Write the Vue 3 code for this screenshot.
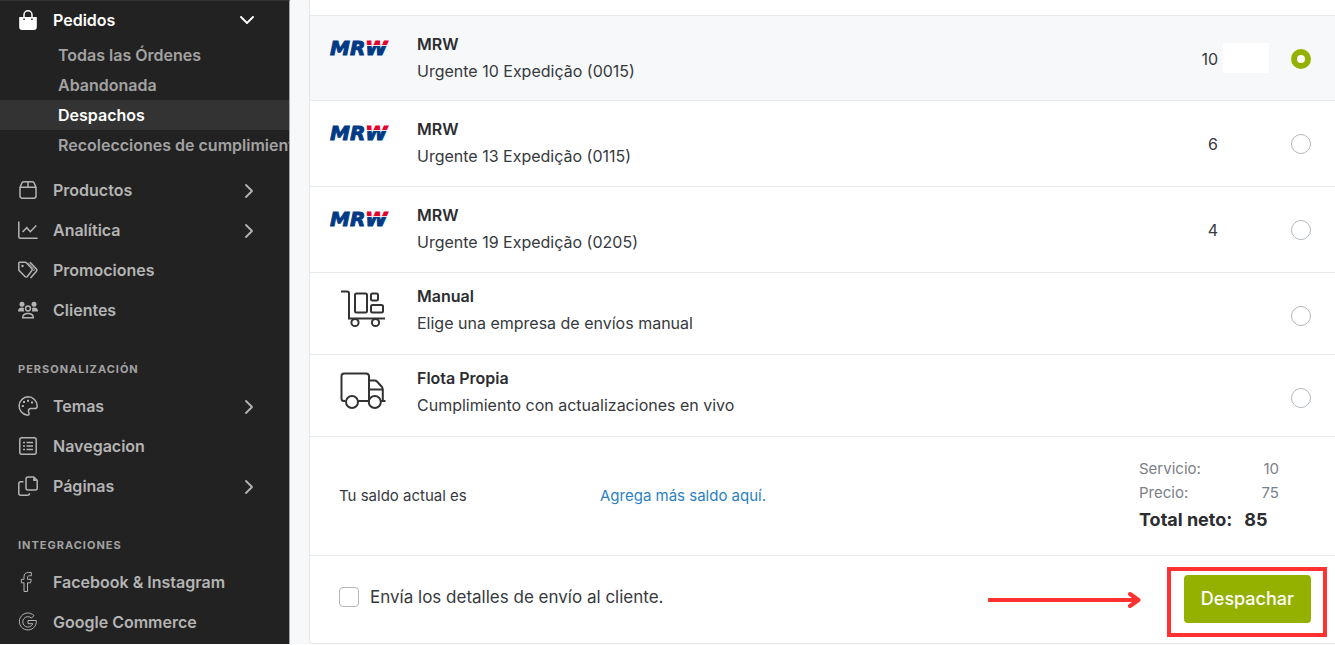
<script setup>
import { ref } from 'vue'

const orders = [
  { label: 'Todas las Órdenes' },
  { label: 'Abandonada' },
  { label: 'Despachos', active: true },
  { label: 'Recolecciones de cumplimiento' },
]

const groups = [
  {
    items: [
      { label: 'Productos', icon: 'box', more: true },
      { label: 'Analítica', icon: 'chart', more: true },
      { label: 'Promociones', icon: 'tags' },
      { label: 'Clientes', icon: 'people' },
    ],
  },
  {
    title: 'Personalización',
    items: [
      { label: 'Temas', icon: 'palette', more: true },
      { label: 'Navegacion', icon: 'list' },
      { label: 'Páginas', icon: 'pages', more: true },
    ],
  },
  {
    title: 'Integraciones',
    items: [
      { label: 'Facebook & Instagram', icon: 'facebook' },
      { label: 'Google Commerce', icon: 'google' },
    ],
  },
]

const services = [
  { id: 'u10', name: 'MRW', detail: 'Urgente 10 Expedição (0015)', price: '10', logo: 'mrw' },
  { id: 'u13', name: 'MRW', detail: 'Urgente 13 Expedição (0115)', price: '6', logo: 'mrw' },
  { id: 'u19', name: 'MRW', detail: 'Urgente 19 Expedição (0205)', price: '4', logo: 'mrw' },
  { id: 'manual', name: 'Manual', detail: 'Elige una empresa de envíos manual', logo: 'cart' },
  { id: 'fleet', name: 'Flota Propia', detail: 'Cumplimiento con actualizaciones en vivo', logo: 'truck' },
]

const selected = ref('u10')
const notify = ref(false)
</script>

<template>
  <div class="layout">
    <nav class="sidebar" aria-label="Menú">
      <a class="item open" href="#">
        <svg class="icon" viewBox="0 0 20 20">
          <path class="solid" d="M1.200 7h17.600v10a3 3 0 0 1-3 3H4.200a3 3 0 0 1-3-3z" />
          <path d="M6 9V4.800a4 4 0 0 1 8 0V9" />
          <path class="hole" d="M5.300 8.500h1.500v1.500H5.300zM13.200 8.500h1.500v1.500h-1.500z" />
        </svg>
        <span class="label">Pedidos</span>
        <svg class="chevron" viewBox="0 0 16 16"><path d="M1 5l6 6 6-6" /></svg>
      </a>
      <a v-for="o in orders" :key="o.label" class="sub" :class="{ active: o.active }" href="#">{{ o.label }}</a>

      <section v-for="(g, i) in groups" :key="i" class="group" :class="{ first: !g.title }">
        <h2 v-if="g.title">{{ g.title }}</h2>
        <a v-for="it in g.items" :key="it.label" class="item" href="#">
          <svg v-if="it.icon === 'box'" class="icon" viewBox="0 0 20 20">
            <path d="M2 7.200L4.200 2.500Q4.700 1.800 5.500 1.800h9q.8 0 1.300.7L18 7.200V16a2.200 2.200 0 0 1-2.200 2.200H4.200A2.200 2.200 0 0 1 2 16zM2 7.200h16M10 1.800v5.400" />
          </svg>
          <svg v-else-if="it.icon === 'chart'" class="icon" viewBox="0 0 20 20">
            <path d="M.8 1.500v15.300q0 1.500 1.500 1.500h17.200M4.500 12l4.300-4.300 3.500 4 6-6.200" />
          </svg>
          <svg v-else-if="it.icon === 'tags'" class="icon" viewBox="0 0 20 20">
            <path d="M.8 3q0-.8.800-.8h5.500q.7 0 1.200.5l5.400 5.700q1.200 1.200 0 2.400L9.400 16.500q-1.200 1.200-2.400 0L1.300 10.700Q.8 10.200.8 9.500zM12 2.200l6 6.200q1.700 1.700 0 3.400L12.500 18" />
            <path class="fine" d="M10 2.600l5.600 5.700q1.300 1.500 0 2.700" />
            <circle class="solid" cx="4.500" cy="6" r="1.200" />
          </svg>
          <svg v-else-if="it.icon === 'people'" class="icon" viewBox="0 0 20 20">
            <circle class="solid" cx="4" cy="4.300" r="2.500" />
            <circle class="solid" cx="16" cy="4.300" r="2.500" />
            <path class="solid" d="M0 11.500q0-4 4-4 1.500 0 2 .7-.6 1.500.2 3.300zM20 11.500q0-4-4-4-1.500 0-2 .7.600 1.500-.2 3.300z" />
            <circle cx="10" cy="8.500" r="2.400" />
            <path d="M4.700 17.800q0-4.300 5.300-4.300t5.300 4.300z" />
          </svg>
          <svg v-else-if="it.icon === 'palette'" class="icon" viewBox="0 0 20 20">
            <path d="M10 .8a9.200 9.200 0 0 0-1 18.300c1.600.2 2.300-.8 2-2l-.5-1.600c-.4-1.500.6-3 2.200-3h4c1.600 0 2.500-1 2.500-2.600C19 4.800 15 .8 10 .8z" />
            <path class="solid" d="M3.800 9h2v2h-2zM5 5h2v2H5zM9 3.800h2v2H9zM13 5.500h2v2h-2z" />
          </svg>
          <svg v-else-if="it.icon === 'list'" class="icon" viewBox="0 0 20 20">
            <rect x="1.800" y="1.800" width="16.400" height="16.400" rx="2" />
            <path d="M5 6.500h2M5 10h2M5 13.500h2M8.500 6.500h6.500M8.500 10h6.500M8.500 13.500h6.500" />
          </svg>
          <svg v-else-if="it.icon === 'pages'" class="icon" viewBox="0 0 20 20">
            <path d="M10 .9h5.800l3.400 3.400V12a2 2 0 0 1-2 2H10a2 2 0 0 1-2-2V2.900a2 2 0 0 1 2-2zM5.500 5.700H2.800a2 2 0 0 0-2 2v9.500a2 2 0 0 0 2 2h6.700a2 2 0 0 0 2-2" />
            <path class="solid" d="M15.200 1l4 4h-4z" />
          </svg>
          <svg v-else-if="it.icon === 'facebook'" class="icon thin" viewBox="0 0 20 20">
            <path d="M6 19.500v-8.700H3.300V7.300H6V4.800C6 1.900 7.600.5 10.500.5h2.800v3.300h-2c-1.200 0-1.800.5-1.800 1.700v1.800h3.700l-.6 3.500H9.500v8.700z" />
          </svg>
          <svg v-else class="icon thin" viewBox="0 0 20 20">
            <path d="M16 3.600A8.500 8.500 0 1 0 18.300 8.500H10v3.200h4.800A5.200 5.200 0 1 1 13.500 6.100z" />
          </svg>
          <span class="label">{{ it.label }}</span>
          <svg v-if="it.more" class="chevron" viewBox="0 0 16 16"><path d="M6 3l6 6-6 6" /></svg>
        </a>
      </section>
    </nav>

    <main class="content">
      <form class="card" @submit.prevent>
        <label v-for="s in services" :key="s.id" class="row" :class="{ chosen: selected === s.id, compact: !s.price }">
          <span class="logo">
            <svg v-if="s.logo === 'mrw'" class="mrw" viewBox="0 0 72 26" role="img" aria-label="MRW">
              <defs>
                <linearGradient :id="'w-' + s.id" gradientUnits="userSpaceOnUse" x1="0" y1="0" x2="0" y2="26">
                  <stop offset="0.370" stop-color="#e4002b" />
                  <stop offset="0.370" stop-color="#f7dfe5" />
                  <stop offset="0.410" stop-color="#f7dfe5" />
                  <stop offset="0.410" stop-color="#003a85" />
                </linearGradient>
              </defs>
              <text x="2" y="20">MR<tspan :fill="`url(#w-${s.id})`" :stroke="`url(#w-${s.id})`">W</tspan></text>
            </svg>
            <svg v-else-if="s.logo === 'cart'" class="pic" viewBox="0 0 46 40">
              <path d="M1 2.500h6q2 0 2 2V29.500H45" />
              <rect x="15" y="4.500" width="12" height="19" rx="1.500" />
              <rect x="31" y="4.500" width="7" height="7" rx="1.500" />
              <rect x="31" y="16" width="12" height="7.500" rx="1.500" />
              <circle cx="15" cy="33.500" r="3.600" />
              <circle cx="35.500" cy="33.500" r="3.600" />
            </svg>
            <svg v-else class="pic" viewBox="0 0 46 40">
              <path d="M5.500 30H4q-2.500 0-2.500-2.500V5q0-2.500 2.500-2.500H26q3 0 3 3V30H17.500M29 9.500h5.500Q36 9.500 37 10.500l5 5.500q.8 1 .8 2.500V30M29 18.500h13.500M41 30h4.500" />
              <circle cx="12" cy="31" r="6" />
              <circle cx="34.800" cy="31" r="6" />
            </svg>
          </span>
          <span class="text">
            <strong>{{ s.name }}</strong>
            <span>{{ s.detail }}</span>
          </span>
          <span class="price">{{ s.price }}</span>
          <span class="currency"></span>
          <input v-model="selected" type="radio" name="service" :value="s.id" />
        </label>

        <section class="balance">
          <span class="saldo">Tu saldo actual es</span>
          <a href="#">Agrega más saldo aquí.</a>
          <dl>
            <div><dt>Servicio:</dt><dd>10</dd></div>
            <div><dt>Precio:</dt><dd>75</dd></div>
            <div class="total"><dt>Total neto:</dt><dd>85</dd></div>
          </dl>
        </section>

        <footer class="actions">
          <label class="notify">
            <input v-model="notify" type="checkbox" />
            Envía los detalles de envío al cliente.
          </label>
          <svg class="arrow" viewBox="0 0 154 18" aria-hidden="true">
            <path d="M0 10H150" />
            <path d="M142 4l8.500 6-8.500 6" stroke-linecap="round" stroke-linejoin="round" />
          </svg>
          <span class="callout"><button type="submit">Despachar</button></span>
        </footer>
      </form>
    </main>
  </div>
</template>

<style>
body { background: #fff; }
</style>

<style scoped>
* { box-sizing: border-box; }
.layout {
  display: flex;
  overflow: hidden;
  font-family: Inter, "Noto Sans", sans-serif;
  font-size: 16px;
  color: #36393d;
}
a { text-decoration: none; }
.sidebar {
  flex: 0 0 290px;
  overflow: hidden;
  padding-bottom: 2px;
  background: #222;
  border-top: 1px solid #333;
  border-right: 1px solid #a5a6a8;
  color: #b4b4b4;
  font-weight: 600;
}
.item {
  display: flex;
  align-items: center;
  height: 40px;
  padding: 0 33px 0 18px;
  color: inherit;
}
.item.open { height: 37px; margin-bottom: 2px; color: #fff; }
.icon { flex: none; width: 20px; height: 20px; margin-right: 15px; }
.label { flex: 1; }
.chevron { width: 16px; height: 16px; }
.icon, .chevron, .pic { fill: none; stroke: currentColor; stroke-width: 1.5; }
.chevron { stroke-width: 1.8; stroke-linecap: round; stroke-linejoin: round; }
.icon.thin { stroke-width: 1; }
.icon .fine { stroke-width: 1; }
.icon .solid { fill: currentColor; stroke: none; }
.icon .hole { fill: #222; stroke: none; }
.sub {
  display: block;
  height: 30px;
  padding-left: 58px;
  line-height: 30px;
  white-space: nowrap;
  color: #a2a2a2;
}
.sub.active { background: #333; color: #fff; }
.group.first { padding-top: 10px; }
.group h2 {
  margin: 0;
  padding: 31px 18px 8px;
  font-size: 11px;
  line-height: 17px;
  letter-spacing: 1px;
  text-transform: uppercase;
  color: #a2a2a2;
}
.content { flex: 1; min-width: 0; padding-left: 19px; background: #f7f8fa; }
.card {
  padding-top: 15px;
  background: #fff;
  border: 1px solid #e3e5e8;
  border-width: 0 0 1px 1px;
  border-bottom-left-radius: 4px;
}
.row {
  display: flex;
  align-items: center;
  padding: 15px 24px 16px 18px;
  border-top: 1px solid #e9ebee;
}
.row.chosen { padding-bottom: 15px; background: #f7f8fa; }
.row.compact { padding-top: 10px; padding-bottom: 17px; }
.logo { align-self: flex-start; flex: none; display: flex; width: 89px; }
.mrw { width: 72px; height: 26px; margin-top: 4px; }
.mrw text {
  font: italic bold 20px "DejaVu Sans", sans-serif;
  fill: #003a85;
  stroke: #003a85;
  stroke-width: 1;
}
.pic { width: 46px; height: 40px; margin: 6px 0 0 12px; stroke-width: 2; color: #333; }
.text { flex: 1; display: flex; flex-direction: column; line-height: 27px; }
.text strong { font-weight: 600; color: #2b2d30; }
.price { width: 40px; padding-top: 2px; text-align: right; }
.currency { width: 46px; height: 30px; margin: 0 22px 0 5px; background: #fff; }
input { appearance: none; flex: none; width: 20px; height: 20px; margin: 0; background: #fff; border: 1px solid #b3b8be; }
input[type="radio"] { margin-top: 2px; border-radius: 50%; }
input[type="radio"]:checked { border: 6px solid #95b100; }
.compact input[type="radio"] { margin-top: 12px; }
.balance {
  display: flex;
  align-items: center;
  padding: 20px 56px 21px 29px;
  border-top: 1px solid #e9ebee;
  font-size: 15px;
}
.saldo { width: 261px; }
.balance a { color: #2b7fbf; }
dl { width: 140px; margin: 0 0 0 auto; line-height: 24px; color: #7b8087; }
dl div { display: flex; justify-content: space-between; }
dd { margin: 0; }
dl .total {
  justify-content: flex-start;
  gap: 12px;
  font-size: 18px;
  line-height: 29px;
  font-weight: 700;
  white-space: nowrap;
  color: #2b2d30;
}
.actions {
  display: flex;
  align-items: center;
  padding: 19px 24px 20px 29px;
  border-top: 1px solid #e9ebee;
}
.notify { flex: 1; display: flex; align-items: center; gap: 11px; padding-bottom: 4px; font-size: 17px; }
.notify input { border-radius: 4px; }
.notify input:checked { background: #95b100; }
.arrow { width: 154px; height: 18px; margin-right: 42px; fill: none; stroke: #ff3131; stroke-width: 4; }
.callout { position: relative; }
.callout::after {
  content: "";
  position: absolute;
  inset: -8px -16px -14px -17px;
  border: 4px solid #ff3131;
  pointer-events: none;
}
button {
  display: block;
  height: 48px;
  padding: 0 17px;
  border: 0;
  border-radius: 4px;
  background: #95b100;
  color: #fff;
  font: 500 18px/48px Inter, "Noto Sans", sans-serif;
}
</style>
